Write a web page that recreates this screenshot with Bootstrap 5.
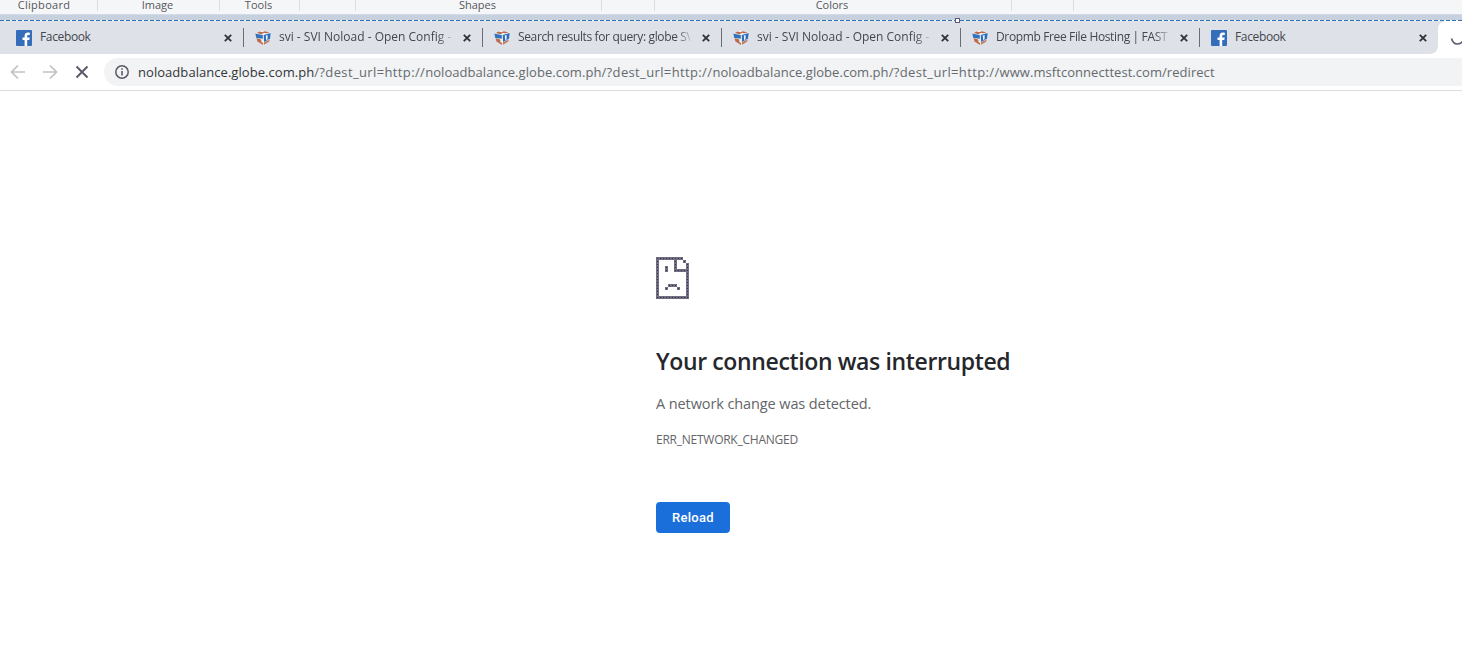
<!DOCTYPE html>
<html lang="en">
<head>
<meta charset="utf-8">
<title>Your connection was interrupted</title>
<link href="https://cdn.jsdelivr.net/npm/bootstrap@5.3.0/dist/css/bootstrap.min.css" rel="stylesheet">
<style>
body{font-family:"Open Sans","Noto Sans",sans-serif;background:#fff;height:661px;overflow:hidden;color:#3c4043}
.ribbon{height:14px;background:#f5f6f8;font-size:11px;line-height:10px;color:#55575c}
.ribbon>div{height:11px;border-right:1px solid #dcdee1;white-space:nowrap}
.ribbon>div:last-child{border:0}
.ribbon .clip{letter-spacing:.3px;margin-left:-9px}
.ribbon .tools{margin-left:-2px}
.ribbon .nudge{margin-left:-2px}
.canvas-edge{height:6px;background:#c6d0df;border-top:1px solid #d5dbe4}
.selection{height:1px;background:repeating-linear-gradient(90deg,#2f74bb 0 4px,#fff 4px 6px)}
.handle{width:5px;height:5px;left:955px;top:-2px;background:#fff;border:1px solid #5d5a70}
.tabs{height:33px;background:#dee1e8}
.strip{width:1438px;background:#dee1e8;border-radius:0 0 8px 0}
.chrome-tab{width:239px;height:33px;padding-left:12px;font-size:12px;line-height:16px}
.chrome-tab:first-child{width:243px;padding-left:16px}
.chrome-tab+.chrome-tab::before{content:"";position:absolute;left:0;top:7px;width:1px;height:19px;background:#6b6d75}
.tab-title{width:172px;margin-left:8px;padding-bottom:1px;overflow:hidden;white-space:nowrap;color:#44474d}
.close-x{margin-left:12px}
.snug{letter-spacing:-.36px}
.fade-end{-webkit-mask-image:linear-gradient(90deg,#000 158px,transparent 176px)}
.active-tab{width:24px;background:#fff;border-top-left-radius:8px}
.corner{width:1438px;background:#fff}
.toolbar{height:37px;background:#fff;border-bottom:1px solid #dadce0}
.omnibox{height:28px;background:#f1f3f4;border-radius:14px 0 0 14px;font-size:13px;color:#666a6e}
.omnibox b{font-weight:400;color:#33363a}
.url{white-space:nowrap;letter-spacing:.05px;padding-top:1px}
.url i{font-style:normal;letter-spacing:.37px}
.error-page{margin-left:656px;padding-top:166px}
h1{font-size:23px;line-height:30px;font-weight:600;letter-spacing:-.37px;color:#25272b;white-space:nowrap;margin:47px 0 0}
.detail{font-size:14.5px;line-height:24px;letter-spacing:-.1px;color:#646568;margin:16px 0 0}
.code{font-size:12px;line-height:18px;letter-spacing:-.25px;color:#646568;margin:15px 0 0}
.reload{width:74px;height:31px;background:#1b6fdb;border:0;border-radius:4px;color:#fff;font:500 13px/31px Roboto,sans-serif;letter-spacing:.3px;padding:0;margin-top:53px}
</style>
</head>
<body>
<svg width="0" height="0" class="position-absolute">
<defs>
<symbol id="fb" viewBox="0 0 16 16"><rect width="16" height="16" rx="1" fill="#346db9"/><path d="M8.600 16V10H6.500V7.600h2.100V5.800c0-2.100 1.300-3.300 3.300-3.300.7 0 1.400.1 1.900.2v2.200h-1.300c-1 0-1.300.5-1.300 1.200v1.500h2.500L13.300 10h-2.100v6z" fill="#fff"/></symbol>
<symbol id="cube" viewBox="0 0 16 16"><path d="M.3 3.200 7 .4 15.800 2.200 14.600 11.300 8.500 15.500 2.200 11.500z" fill="#f0f2f5"/><path d="M1.800 3 4.500 1.600l2.500.7L10 1.200l4.800 1.300L11 3.300 9 2.700 6.500 4.200z" fill="#b9694a"/><path d="M.3 3.500 3.500 4.200 7.800 5v4.800L5 8.300 1.300 8z" fill="#3173bd"/><path d="M1.500 8.300 4.500 8.800 8 10.800v4.200L2.400 11.500z" fill="#ba6e51"/><path d="M8.800 5 15.700 3 15 8.800 9 12z" fill="#2d6dba"/><path d="M8.800 12.500 14.700 9.500 14.300 11.400 8.800 15z" fill="#bd7a5d"/><path d="M6.300 8.200 8.700 9.200 8.700 13.500 6.300 12z" fill="#f1e9e6"/><path d="M10.800 5.500 12.600 5v4.300l-1.400.9z" fill="#eef3f8"/></symbol>
<symbol id="x" viewBox="0 0 8 8"><path d="M.8.8 7.200 7.200M7.200.8.8 7.200" stroke="#303137" stroke-width="1.800"/></symbol>
<pattern id="dots" width="3" height="3" patternUnits="userSpaceOnUse"><rect width="3" height="3" fill="#716d82"/><rect x="1" y="1" width="1" height="1" fill="#333145"/></pattern>
</defs>
</svg>
<div class="ribbon d-flex text-center">
<div style="width:98px"><span class="clip">Clipboard</span></div><div style="width:122px"><span class="nudge">Image</span></div><div style="width:80px"><span class="tools">Tools</span></div><div style="width:56px"></div><div style="width:246px"><span class="nudge">Shapes</span></div><div style="width:53px"></div><div style="width:357px"><span class="nudge">Colors</span></div><div style="width:62px"></div><div></div>
</div>
<div class="canvas-edge"></div>
<div class="selection position-relative"><div class="handle position-absolute"></div></div>
<div class="tabs d-flex">
<div class="corner"><div class="strip d-flex">
<div class="chrome-tab d-flex align-items-center position-relative"><svg width="16" height="16"><use href="#fb"/></svg><div class="tab-title snug">Facebook</div><svg class="close-x" width="8" height="8"><use href="#x"/></svg></div>
<div class="chrome-tab d-flex align-items-center position-relative"><svg width="16" height="16"><use href="#cube"/></svg><div class="tab-title fade-end">svi - SVI Noload - Open Config -</div><svg class="close-x" width="8" height="8"><use href="#x"/></svg></div>
<div class="chrome-tab d-flex align-items-center position-relative"><svg width="16" height="16"><use href="#cube"/></svg><div class="tab-title fade-end snug">Search results for query: globe SV</div><svg class="close-x" width="8" height="8"><use href="#x"/></svg></div>
<div class="chrome-tab d-flex align-items-center position-relative"><svg width="16" height="16"><use href="#cube"/></svg><div class="tab-title fade-end">svi - SVI Noload - Open Config -</div><svg class="close-x" width="8" height="8"><use href="#x"/></svg></div>
<div class="chrome-tab d-flex align-items-center position-relative"><svg width="16" height="16"><use href="#cube"/></svg><div class="tab-title fade-end snug">Dropmb Free File Hosting | FAST</div><svg class="close-x" width="8" height="8"><use href="#x"/></svg></div>
<div class="chrome-tab d-flex align-items-center position-relative"><svg width="16" height="16"><use href="#fb"/></svg><div class="tab-title snug">Facebook</div><svg class="close-x" width="8" height="8"><use href="#x"/></svg></div>
</div></div>
<div class="active-tab"><svg class="d-block" width="24" height="33" fill="none"><path d="M13.500 17.500c1 3.500 3 5.500 5.500 5.500s4.500-1 6-3" stroke="#5d5a6c" stroke-width="1.600"/></svg></div>
</div>
<div class="toolbar d-flex align-items-center">
<svg width="104" height="28" fill="none"><path d="M25 14H12M18 7.500 11.500 14 18 20.500M43 14H56M50 7.500 56.500 14 50 20.500" stroke="#c2c2c4" stroke-width="1.700"/><path d="M76.500 8.500l11 11M87.500 8.500l-11 11" stroke="#5d5a6c" stroke-width="2"/></svg>
<div class="omnibox d-flex align-items-center flex-grow-1"><svg width="34" height="28" fill="none"><circle cx="18" cy="14" r="6.200" stroke="#5b5a68" stroke-width="1.500"/><path d="M18 13v4.500M18 10.300v1.500" stroke="#5b5a68" stroke-width="1.600"/></svg><span class="url"><b>noloadbalance.globe.com.ph</b><i>/?dest_url=http://</i>noloadbalance.globe.com.ph<i>/?dest_url=http://</i>noloadbalance.globe.com.ph<i>/?dest_url=http://</i>www.msftconnecttest.com/redirect</span></div>
</div>
<main class="error-page">
<svg class="d-block" width="33" height="42"><path fill="url(#dots)" d="M0 0H27V3H21V12H33V42H0ZM3 3V39H30V15H18V3ZM27 3h3v3h-3zM30 6h3v6h-3zM9 9h3v6H9zM12 27h9v3h-9zM9 30h3v3H9zM21 30h3v3h-3z" fill-rule="evenodd"/></svg>
<h1>Your connection was interrupted</h1>
<p class="detail">A network change was detected.</p>
<p class="code">ERR_NETWORK_CHANGED</p>
<button class="reload btn d-block">Reload</button>
</main>
<script src="https://cdn.jsdelivr.net/npm/bootstrap@5.3.0/dist/js/bootstrap.bundle.min.js"></script>
</body>
</html>
